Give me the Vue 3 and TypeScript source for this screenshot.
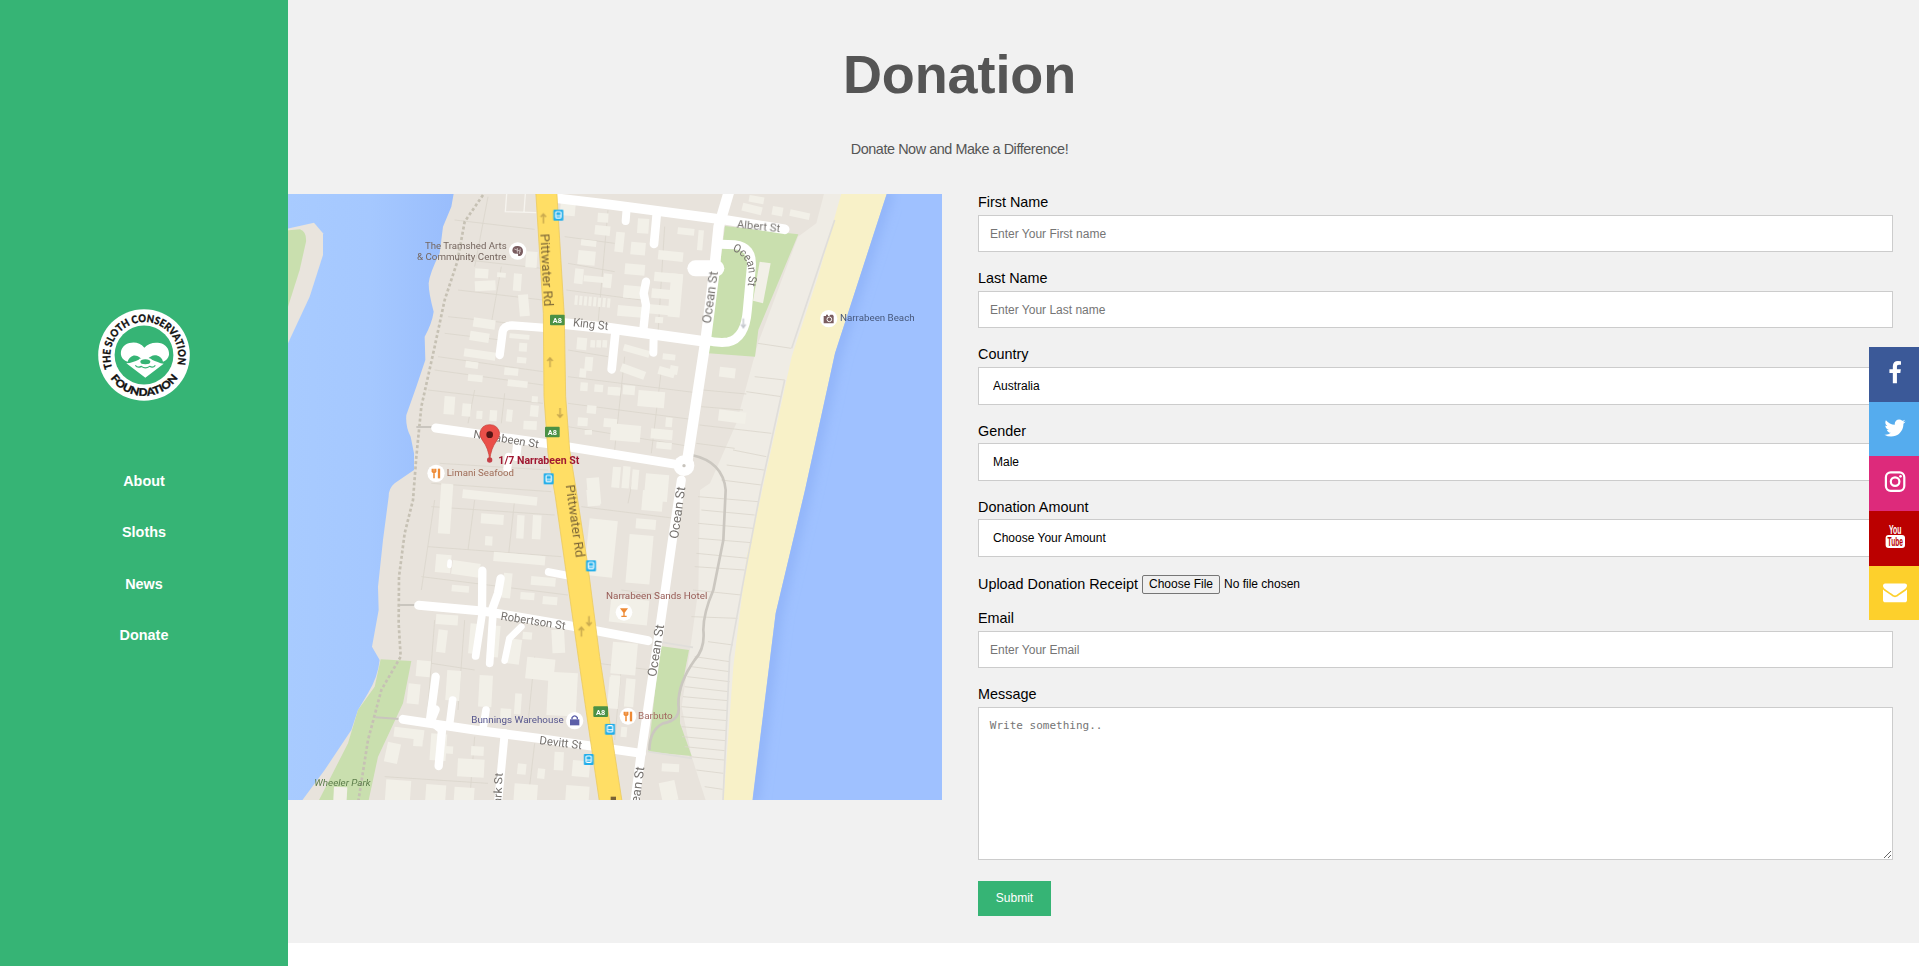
<script setup lang="ts">
import { ref } from 'vue'

interface Road { d: string; w: number }
interface Label { t: string; x: number; y: number; len: number; size: number; rot?: number; color?: string; bold?: boolean; italic?: boolean }

const links: string[] = ['About', 'Sloths', 'News', 'Donate']

const firstName = ref('')
const lastName = ref('')
const country = ref('Australia')
const gender = ref('Male')
const amount = ref('Choose Your Amount')
const email = ref('')
const message = ref('')

const roads: Road[] = [
  { d: 'M635 495L644 425Q647 407 672 406L800 416', w: 25 },
  { d: 'M800 398L966 415L1256 455', w: 32 },
  { d: 'M800 24L966 44L1300 88L1490 118', w: 29 },
  { d: 'M1323 5L1292 110L1277 260L1253 450L1196 825', w: 32 },
  { d: 'M1180 870L1156 1030L1113 1330L1058 1700L1040 1840', w: 27 },
  { d: 'M1300 163L1340 164Q1395 170 1390 230L1378 360Q1372 445 1320 456Q1290 460 1250 450', w: 27 },
  { d: 'M1222 235L1285 235', w: 48 },
  { d: 'M1016 55L1013 93', w: 24 },
  { d: 'M1106 75L1098 162', w: 26 },
  { d: 'M1074 275L1067 310L1074 345L1066 420', w: 25 },
  { d: 'M982 430L971 538', w: 26 },
  { d: 'M1097 440L1096 488', w: 24 },
  { d: 'M443 714L800 764L1188 827', w: 27 },
  { d: 'M688 765L684 800', w: 26 },
  { d: 'M662 800L658 835', w: 24 },
  { d: 'M392 1246L590 1264L840 1306L1080 1352', w: 27 },
  { d: 'M583 1142L582 1265', w: 25 },
  { d: 'M638 1165L630 1210L610 1265', w: 25 },
  { d: 'M582 1275L563 1398', w: 23 },
  { d: 'M615 1270L605 1420', w: 23 },
  { d: 'M700 1310L664 1345L650 1412', w: 20 },
  { d: 'M782 1146L845 1158', w: 23 },
  { d: 'M485 1115L484 1128', w: 14 },
  { d: 'M345 1588L560 1620L750 1645L1060 1690', w: 27 },
  { d: 'M443 1558L428 1595', w: 25 },
  { d: 'M443 1460L426 1590L462 1620L452 1728', w: 25 },
  { d: 'M494 1530L485 1600', w: 23 },
  { d: 'M594 1560L585 1615', w: 23 },
  { d: 'M650 1630L630 1840', w: 24 },
]

/* x, y, width, height, tilt */
const blocks: number[][] = [
  [562, 235, 40, 28, 4], [560, 274, 62, 30, -3], [628, 247, 26, 14, 5], [678, 250, 24, 52, 4], [690, 315, 30, 65, -5],
  [558, 382, 66, 28, 8], [548, 422, 58, 28, 9], [530, 475, 95, 24, 8], [665, 430, 60, 14, 5], [694, 458, 24, 26, 4],
  [688, 500, 28, 18, 6], [534, 512, 38, 20, 8], [541, 552, 44, 20, 6], [650, 532, 42, 22, 6], [660, 568, 60, 20, 6],
  [470, 618, 32, 54, 4], [524, 640, 26, 38, 5], [566, 662, 18, 24, 4], [606, 660, 22, 32, 4], [657, 658, 18, 36, 6],
  [728, 645, 25, 34, 5], [732, 618, 18, 18, 4], [707, 692, 40, 26, 3], [715, 184, 34, 48, 4],
  [820, 20, 45, 55, 5], [930, 68, 32, 28, 4], [922, 105, 46, 28, 6], [880, 148, 46, 18, 6], [872, 180, 52, 42, 6],
  [862, 235, 26, 45, 6], [888, 256, 60, 18, 5], [948, 250, 25, 42, 6], [868, 442, 30, 36, 5], [908, 450, 14, 22, 4],
  [926, 450, 14, 22, 4], [944, 450, 14, 22, 4], [892, 500, 24, 42, 5], [876, 535, 20, 26, 6], [878, 577, 22, 25, 4],
  [920, 583, 26, 22, 4], [960, 590, 30, 24, 4], [898, 645, 28, 24, 6], [870, 682, 30, 25, 4], [948, 684, 40, 26, 5],
  [890, 720, 22, 14, 0], [1050, 85, 34, 44, 4], [985, 125, 26, 60, 6], [1030, 155, 44, 38, 5], [1170, 112, 50, 20, 6],
  [1232, 120, 16, 60, 5], [1112, 180, 75, 28, 6], [1012, 220, 60, 32, 5], [1008, 285, 60, 38, 5], [1100, 245, 85, 28, 5],
  [1092, 295, 80, 28, 5], [1150, 250, 36, 130, 5], [990, 345, 76, 32, 5], [1080, 342, 75, 28, 5], [1102, 380, 24, 18, 5],
  [1366, 38, 60, 24, 14], [1455, 48, 32, 26, 10], [1508, 58, 60, 20, 12], [1385, 15, 45, 20, 10],
  [1010, 462, 80, 20, 16], [1004, 520, 75, 25, 20], [1125, 490, 38, 18, 6], [1115, 528, 50, 24, 16], [1148, 525, 24, 26, 10],
  [970, 590, 28, 25, 5], [1006, 585, 36, 28, 5], [1052, 600, 80, 48, 5], [1134, 682, 20, 28, 5], [970, 700, 90, 50, 5],
  [1090, 715, 65, 30, 5], [1106, 755, 46, 20, 5], [975, 830, 24, 62, 5], [1006, 828, 22, 66, 5], [1034, 838, 20, 60, 5],
  [1074, 850, 70, 80, 5], [1296, 530, 48, 30, 7], [1294, 658, 82, 34, 7],
  [895, 865, 38, 80, -5], [525, 898, 225, 26, 6], [460, 880, 36, 150, 4], [580, 970, 68, 30, 4], [688, 975, 22, 70, 3],
  [735, 975, 26, 72, 3], [592, 1038, 22, 28, 3], [618, 1085, 155, 28, 5], [445, 1092, 46, 54, 5], [495, 1110, 84, 42, 8],
  [648, 1148, 26, 75, 6], [730, 1158, 74, 26, 5], [492, 1184, 52, 20, 5], [698, 1206, 42, 22, 4], [765, 1218, 44, 24, 5],
  [445, 1272, 66, 30, 4], [452, 1318, 28, 68, 7], [548, 1300, 32, 90, 5], [604, 1305, 34, 95, 5], [665, 1345, 38, 75, 8],
  [705, 1325, 28, 22, 5], [790, 1320, 38, 70, -3], [387, 1410, 42, 48, 5], [362, 1480, 36, 60, 6], [478, 1440, 42, 90, 4],
  [575, 1455, 40, 95, 3], [718, 1400, 85, 65, 6], [782, 1445, 88, 130, 3], [682, 1510, 20, 62, 4], [638, 1555, 32, 30, 3],
  [320, 1610, 90, 30, 7], [300, 1655, 40, 60, 12], [378, 1630, 28, 38, 4], [430, 1630, 48, 80, 4], [470, 1668, 26, 22, 4],
  [510, 1705, 80, 54, 3], [550, 1668, 38, 28, 3], [690, 1720, 26, 32, 6], [750, 1735, 22, 30, 6], [800, 1685, 28, 55, 3],
  [855, 1710, 52, 48, 5], [295, 1768, 75, 70, 4], [415, 1782, 60, 55, 4], [500, 1790, 60, 45, 4], [680, 1780, 70, 60, 4],
  [835, 1785, 70, 55, 4], [905, 985, 85, 170, 6], [895, 900, 38, 50, -5], [1065, 900, 62, 60, 5], [1045, 985, 60, 30, 5],
  [1025, 1032, 72, 146, 5], [970, 1220, 115, 75, 6], [975, 1355, 75, 95, 5], [968, 1455, 30, 100, 5], [1015, 1465, 28, 85, 5],
  [1000, 1610, 18, 30, 5], [1122, 1720, 52, 24, 3], [1112, 1780, 48, 60, -12], [965, 1460, 20, 80, 5], [138, 1790, 40, 45, 3],
]

const lots: string[] = [
  'M500 90L740 118', 'M540 210L760 235', 'M510 300L765 330', 'M480 380L765 410', 'M470 430L640 450', 'M450 500L765 545',
  'M440 540L765 585', 'M420 600L765 640', 'M455 820L780 840', 'M600 20L560 230', 'M640 230L610 400', 'M560 600L540 700', 'M650 610L640 700',
  'M430 880L790 905', 'M430 950L800 975', 'M420 1070L820 1100', 'M400 1160L840 1215', 'M440 930L400 1200', 'M560 930L540 1080',
  'M680 930L660 1110', 'M440 1290L420 1550', 'M530 1290L510 1560', 'M740 1400L720 1600', 'M430 1420L560 1440',
  'M290 1760L600 1780', 'M560 1640L545 1830', 'M740 1660L720 1830', 'M830 140L980 160', 'M840 220L980 245', 'M835 300L1060 330',
  'M840 480L960 500', 'M840 560L1240 610', 'M840 640L1225 690', 'M840 710L1210 770', 'M960 60L930 400', 'M1130 110L1110 430',
  'M1010 500L980 780', 'M1120 540L1090 790', 'M1040 840L1020 940', 'M880 950L1160 985', 'M1000 1200L1120 1215', 'M930 1420L1090 1440',
  'M1000 1430L980 1650', 'M1400 560L1490 570', 'M1375 605L1480 620', 'M1245 600L1375 612', 'M1240 650L1365 660', 'M1235 705L1450 730',
  'M1225 760L1340 775', 'M1335 780L1435 800', 'M1316 825L1428 840', 'M1300 870L1420 885', 'M1410 460L1510 475', 'M1230 920L1410 935',
  'M1240 960L1400 975', 'M1230 1000L1395 1015', 'M1230 1045L1390 1058', 'M1225 1090L1380 1105', 'M1220 1130L1370 1140',
  'M1215 1200L1360 1215', 'M1210 1280L1348 1285', 'M1260 1355L1335 1365', 'M1220 1400L1325 1415', 'M1210 1430L1325 1445',
  'M1198 1460L1325 1475', 'M1190 1490L1322 1505', 'M1185 1520L1320 1532', 'M1180 1550L1320 1562', 'M1180 1580L1318 1592',
  'M1180 1610L1315 1622', 'M1182 1640L1312 1652', 'M1190 1670L1310 1682', 'M1205 1700L1308 1710', 'M1225 1740L1306 1750', 'M1250 1790L1304 1798',
]

const labels: Label[] = [
  { t: 'The Tramshed Arts', x: 411, y: 176, len: 245, size: 29, color: '#75665f' },
  { t: '& Community Centre', x: 387, y: 211, len: 268, size: 29, color: '#75665f' },
  { t: 'Pittwater Rd', x: 757, y: 132, len: 218, size: 37, rot: 87, color: '#7a6436' },
  { t: 'Pittwater Rd', x: 834, y: 886, len: 220, size: 37, rot: 82, color: '#7a6436' },
  { t: 'King St', x: 854, y: 409, len: 106, size: 36, rot: 6 },
  { t: 'Albert St', x: 1346, y: 112, len: 130, size: 34, rot: 6 },
  { t: 'Ocean St', x: 1269, y: 402, len: 158, size: 38, rot: -82 },
  { t: 'Ocean St', x: 1170, y: 1048, len: 158, size: 38, rot: -82 },
  { t: 'Ocean St', x: 1104, y: 1462, len: 158, size: 38, rot: -81 },
  { t: 'Ocean St', x: 1047, y: 1888, len: 158, size: 38, rot: -82 },
  { t: 'Park St', x: 638, y: 1867, len: 118, size: 34, rot: -87 },
  { t: 'Narrabeen St', x: 555, y: 743, len: 198, size: 34, rot: 9 },
  { t: 'Robertson St', x: 637, y: 1289, len: 196, size: 35, rot: 9 },
  { t: 'Devitt St', x: 753, y: 1662, len: 128, size: 35, rot: 7 },
  { t: '1/7 Narrabeen St', x: 631, y: 821, len: 243, size: 31, color: '#a01830', bold: true },
  { t: 'Limani Seafood', x: 476, y: 858, len: 202, size: 29, color: '#a06d58' },
  { t: 'Narrabeen Beach', x: 1656, y: 393, len: 224, size: 27, color: '#46577b' },
  { t: 'Narrabeen Sands Hotel', x: 954, y: 1227, len: 304, size: 28, color: '#975b55' },
  { t: 'Barbuto', x: 1050, y: 1587, len: 104, size: 28, color: '#a36a62' },
  { t: 'Bunnings Warehouse', x: 550, y: 1600, len: 277, size: 28, color: '#55558d' },
  { t: 'Wheeler Park', x: 79, y: 1789, len: 169, size: 26, color: '#5c7d4b', italic: true },
]

const stops: number[][] = [[811, 75], [782, 866], [909, 1127], [966, 1617], [902, 1708]]
const shields: number[][] = [[808, 390], [793, 726], [938, 1565]]
const arrows: number[][] = [[766, 85, 0], [786, 517, 0], [816, 669, 180], [903, 1293, 180], [880, 1325, 0]]
</script>

<template>
  <div class="page">
    <aside class="sidebar">
      <svg class="logo" viewBox="0 0 96 96" role="img" aria-label="The Sloth Conservation Foundation">
        <defs>
          <path id="ring-top" d="M16.4 60.9A34 34 0 1 1 80.8 58.9" />
          <path id="ring-bottom" d="M13.2 69.7A41.2 41.2 0 0 0 82.8 69.7" />
        </defs>
        <circle cx="48" cy="48" r="45.8" fill="#fff" />
        <circle cx="48" cy="48" r="29.4" fill="#36b475" />
        <text class="ring-text"><textPath href="#ring-top" textLength="127" lengthAdjust="spacingAndGlyphs">THE SLOTH CONSERVATION</textPath></text>
        <text class="ring-text"><textPath href="#ring-bottom" startOffset="2" textLength="79" lengthAdjust="spacingAndGlyphs">FOUNDATION</textPath></text>
        <g transform="translate(-16 -16.3) scale(.33333)">
          <path d="M193 171C181 156 164 153 148 157C128 162 119 180 124 197C127 206 135 211 143 213C148 198 160 191 172 196C180 199 183 205 190 207C194 208 199 207 203 205C210 198 218 192 229 194C241 197 247 205 249 213C258 210 265 203 267 193C269 175 257 160 239 157C221 154 205 158 193 171Z" fill="#fff" />
          <path d="M139 218C153 218 165 211 176 207C181 199 210 199 216 207C227 211 239 218 251 219L196 261Z" fill="#fff" />
          <ellipse cx="196" cy="213" rx="15" ry="7.500" fill="#36b475" />
          <path d="M166 224Q173 233 184 227Q196 236 209 227Q219 233 226 224" fill="none" stroke="#36b475" stroke-width="3.500" />
        </g>
      </svg>
      <nav class="nav">
        <a v-for="l in links" :key="l" href="#">{{ l }}</a>
      </nav>
    </aside>

    <main class="content">
      <header class="heading">
        <h1>Donation</h1>
        <p>Donate Now and Make a Difference!</p>
      </header>

      <div class="columns">
        <svg class="map" viewBox="0 12 1962 1818" preserveAspectRatio="none">
          <defs>
            <linearGradient id="lagoon" x1="0" x2="1" y1="0" y2="0">
              <stop offset="0" stop-color="#a8cbff" />
              <stop offset=".5" stop-color="#a5c8ff" />
              <stop offset="1" stop-color="#99bdfc" />
            </linearGradient>
            <filter id="shore" x="-10%" y="-10%" width="120%" height="120%"><feGaussianBlur stdDeviation="18" /></filter>
            <filter id="soft" x="0" y="0" width="100%" height="100%"><feGaussianBlur stdDeviation="1.8" /></filter>
            <filter id="soft-text" x="0" y="0" width="100%" height="100%"><feGaussianBlur stdDeviation="0.9" /></filter>
            <clipPath id="sea"><path d="M1796 12L1641 490L1551 900L1463 1270L1394 1830H1962V12Z" /></clipPath>
            <path id="bend" d="M1332 182Q1400 205 1376 300" />
          </defs>
          <g filter="url(#soft)">
            <rect x="-10" y="0" width="1990" height="1850" fill="#e8e3dc" />
            <path d="M1611 0L1585 100L1530 140L1410 460L1345 700L1266 880L1236 900L1231 1200L1206 1380L1181 1550L1211 1700L1256 1840H1962V0Z" fill="#efece5" />
            <path d="M1663 0L1590 260L1511 500L1416 930L1376 1100L1336 1430L1306 1840H1962V0Z" fill="#f8f1c8" />
            <path d="M1800 0L1641 490L1551 900L1463 1270L1392 1840H1980V0Z" fill="#9fc1ff" />
            <g clip-path="url(#sea)"><path d="M1800 0L1641 490L1551 900L1463 1270L1392 1840" fill="none" stroke="#8fb2f8" stroke-width="36" filter="url(#shore)" /></g>
            <path d="M-10 0H499L490 50L465 110L455 190Q425 250 422 280Q422 310 437 365Q432 400 410 440L412 510L385 590L355 675Q352 710 368 740L378 790V840L320 880Q302 895 302 920L285 1050L270 1190L272 1260L252 1370L275 1410Q270 1460 240 1510L210 1560L190 1620L110 1740L36 1840H-10Z" fill="url(#lagoon)" />
            <path d="M-10 118L78 98L105 130V195L65 320L0 460H-10Z" fill="#e9e4dd" />
            <path d="M-10 122L36 118Q56 125 54 155L35 240L0 350H-10Z" fill="#c9dfae" />
            <path d="M1311 108L1531 133L1411 420L1401 500L1261 490Z" fill="#c9dfae" />
            <path d="M1116 1368L1203 1380L1176 1520V1600L1211 1698L1081 1685Z" fill="#c9dfae" />
            <path d="M278 1408L370 1413L345 1540L270 1700L240 1840H88L180 1660L210 1560L260 1490Z" fill="#c9dfae" />
            <g fill="none" stroke="#dbd6cd" stroke-width="2.500"><path v-for="d in lots" :key="d" :d="d" /></g>
            <g fill="#f2f0e8">
              <rect v-for="(b, i) in blocks" :key="i" :x="b[0]" :y="b[1]" :width="b[2]" :height="b[3]" :transform="`rotate(${b[4]} ${b[0]} ${b[1]})`" />
              <path d="M1415 215L1448 220L1425 340L1395 332Z" />
              <path d="M860 330H970" stroke="#f2f0e8" stroke-width="28" stroke-dasharray="9 5" transform="rotate(5 860 330)" />
            </g>
            <path d="M656 12L652 65L745 68M712 12L708 66" fill="none" stroke="#f6f4ef" stroke-width="4" />
            <path d="M585 15L530 95L508 215L470 330L440 470L400 650L385 800L375 930L350 1030L333 1160L332 1300L338 1400L280 1500L240 1650L210 1840" fill="none" stroke="#c6c1b4" stroke-width="8" stroke-dasharray="9 7" />
            <path d="M385 711H440M335 1245H385M262 1582L345 1588" stroke="#c9c5be" stroke-width="6" />
            <path d="M1211 795Q1305 815 1313 900L1306 1050L1276 1200Q1246 1270 1246 1320Q1252 1375 1220 1410Q1170 1480 1171 1545Q1180 1590 1125 1600Q1085 1620 1084 1680" fill="none" stroke="#cbc7c0" stroke-width="8" />
            <path d="M1640 90L1511 475M1490 570L1420 890L1365 1180L1325 1400L1305 1830M1081 1685L1212 1705M1110 1355L1215 1372" fill="none" stroke="#e0deda" stroke-width="5" />
            <g fill="none" stroke="#fff" stroke-linecap="round" stroke-linejoin="round">
              <path v-for="r in roads" :key="r.d" :d="r.d" :stroke-width="r.w" />
            </g>
            <circle cx="1188" cy="827" r="31" fill="#fff" />
            <circle cx="1188" cy="827" r="5" fill="#c8c4bd" />
            <path d="M743 0L766 370L768 620L780 790L802 920L875 1430L935 1840H1003L935 1400L900 1130L866 910L845 780L833 620L829 380L806 0Z" fill="#ffde65" stroke="#eccb62" stroke-width="2.500" />
          </g>

          <g filter="url(#soft-text)">
            <g v-for="(a, i) in arrows" :key="'a' + i" :transform="`translate(${a[0]} ${a[1]}) rotate(${a[2]})`">
              <path d="M0 15V-13M-8 -4L0 -13L8 -4" fill="none" stroke="#c9a94f" stroke-width="4.500" />
            </g>
            <path d="M1366 385V412M1359 403L1366 413L1373 403" fill="none" stroke="#c3c6cc" stroke-width="4" />

            <g v-for="(s, i) in stops" :key="'s' + i" :transform="`translate(${s[0]} ${s[1]})`">
              <rect x="-15" y="-16" width="30" height="33" rx="3" fill="#22aeea" />
              <rect x="-8" y="-10" width="16" height="19" rx="3" fill="none" stroke="#fff" stroke-width="3.500" />
              <path d="M-7 2H7" stroke="#fff" stroke-width="3" />
            </g>
            <g v-for="(s, i) in shields" :key="'h' + i">
              <rect :x="s[0] - 22" :y="s[1] - 16" width="44" height="32" rx="3" fill="#4c9145" />
              <text :x="s[0]" :y="s[1] + 9" text-anchor="middle" class="shield">A8</text>
            </g>

            <g fill="#fff">
              <circle cx="689" cy="183" r="26" /><circle cx="444" cy="850" r="26" /><circle cx="1622" cy="386" r="26" />
              <circle cx="1008" cy="1267" r="25" /><circle cx="1020" cy="1579" r="25" /><circle cx="860" cy="1592" r="26" />
            </g>
            <path d="M673 182Q673 167 690 168Q706 170 705 186Q702 201 690 197Q692 189 685 191Q675 192 673 182Z" fill="#7a5d60" />
            <path d="M679 177L698 184M688 174V188M697 176L694 192" stroke="#d8cccc" stroke-width="2.500" />
            <g v-for="(f, i) in [[444, 850], [1020, 1579]]" :key="'f' + i" :transform="`translate(${f[0]} ${f[1]})`" stroke="#ee8a35" fill="none">
              <path d="M-11 -14V-5Q-6 2 -1 -5V-14M-6 -14V15" stroke-width="4.500" />
              <path d="M9 -14V15" stroke-width="7" />
            </g>
            <path d="M996 1255H1020L1010 1268V1277H1016V1281H1000V1277H1006V1268Z" fill="#ee8a35" />
            <path d="M1607 378H1614V374H1620V378H1624L1627 374H1634L1637 378V400H1607Z" fill="#7a5d60" />
            <circle cx="1624" cy="388" r="7" fill="#7a5d60" stroke="#fff" stroke-width="3" />
            <path d="M846 1588H874V1606H846Z" fill="#5b5ea8" />
            <path d="M852 1588V1583Q860 1572 868 1583V1588" fill="none" stroke="#5b5ea8" stroke-width="4" />

            <text
              v-for="(l, i) in labels" :key="'l' + i" :x="l.x" :y="l.y" :textLength="l.len" lengthAdjust="spacingAndGlyphs"
              :font-size="l.size" :fill="l.color ?? '#77736f'" :font-weight="l.bold ? 700 : 400"
              :font-style="l.italic ? 'italic' : 'normal'" :transform="l.rot ? `rotate(${l.rot} ${l.x} ${l.y})` : undefined"
              class="map-label"
            >{{ l.t }}</text>
            <text class="map-label" font-size="35" fill="#77736f"><textPath href="#bend" textLength="128" lengthAdjust="spacingAndGlyphs">Ocean St</textPath></text>

            <circle cx="605" cy="810" r="8" fill="#c5414a" />
            <path d="M605 810Q602 775 584 752Q574 738 576 728Q581 704 605 704Q630 704 635 730Q635 742 625 754Q609 775 605 810Z" fill="#ea5048" stroke="#c23b36" stroke-width="2" />
            <circle cx="605" cy="734" r="10" fill="#521313" />
            <path d="M968 1820H984V1830H968Z" fill="#7a6436" />
          </g>
        </svg>

        <form class="form" @submit.prevent>
          <div class="field">
            <label for="fname">First Name</label>
            <input id="fname" v-model="firstName" type="text" placeholder="Enter Your First name">
          </div>
          <div class="field">
            <label for="lname">Last Name</label>
            <input id="lname" v-model="lastName" type="text" placeholder="Enter Your Last name">
          </div>
          <div class="field">
            <label for="country">Country</label>
            <select id="country" v-model="country"><option>Australia</option></select>
          </div>
          <div class="field low">
            <label for="gender">Gender</label>
            <select id="gender" v-model="gender"><option>Male</option></select>
          </div>
          <div class="field low">
            <label for="amount">Donation Amount</label>
            <select id="amount" v-model="amount"><option>Choose Your Amount</option></select>
          </div>
          <div class="upload">
            <label for="receipt">Upload Donation Receipt</label>
            <input id="receipt" type="file">
          </div>
          <div class="field">
            <label for="email">Email</label>
            <input id="email" v-model="email" type="text" placeholder="Enter Your Email">
          </div>
          <div class="field message">
            <label for="message">Message</label>
            <textarea id="message" v-model="message" placeholder="Write something.." />
          </div>
          <button type="submit" class="submit">Submit</button>
        </form>
      </div>
    </main>

    <div class="social">
      <a href="#" class="facebook" aria-label="Facebook">
        <svg viewBox="0 0 1792 1792"><path d="M1343 12v264h-157q-86 0-116 36t-30 108v189h293l-39 296h-254v759h-306v-759h-255v-296h255v-218q0-186 104-288.500t277-102.500q147 0 228 12z" /></svg>
      </a>
      <a href="#" class="twitter" aria-label="Twitter">
        <svg viewBox="0 0 1792 1792"><path d="M1684 408q-67 98-162 167 1 14 1 42 0 130-38 259.500t-115.500 248.500-184.500 210.500-258 146-323 54.500q-271 0-496-145 35 4 78 4 225 0 401-138-105-2-188-64.500t-114-159.500q33 5 61 5 43 0 85-11-112-23-185.500-111.500t-73.500-205.500v-4q68 38 146 41-66-44-105-115t-39-154q0-88 44-163 121 149 294.500 238.500t371.500 99.500q-8-38-8-74 0-134 94.500-228.500t228.500-94.500q140 0 236 102 109-21 205-78-37 115-142 178 93-10 186-50z" /></svg>
      </a>
      <a href="#" class="instagram" aria-label="Instagram">
        <svg viewBox="0 0 24 24">
          <rect x="2.900" y="2.400" width="18.400" height="18.400" rx="4.800" fill="none" stroke="#fff" stroke-width="2.200" />
          <circle cx="12.100" cy="11.600" r="4.300" fill="none" stroke="#fff" stroke-width="2.200" />
          <circle cx="17.500" cy="6.300" r="1.350" />
        </svg>
      </a>
      <a href="#" class="youtube" aria-label="YouTube">
        <svg viewBox="0 0 24 24">
          <text x="6" y="9.200" font-size="12" textLength="12.600" lengthAdjust="spacingAndGlyphs" class="tube">You</text>
          <rect x="2.600" y="10" width="19.400" height="13" rx="3" />
          <text x="4.600" y="21" font-size="12" textLength="15.400" lengthAdjust="spacingAndGlyphs" class="tube cut">Tube</text>
        </svg>
      </a>
      <a href="#" class="mail" aria-label="Email">
        <svg viewBox="0 0 1792 1792"><path d="M1792 710v794q0 66-47 113t-113 47h-1472q-66 0-113-47t-47-113v-794q44 49 101 87 362 246 497 345 57 42 92.500 65.500t94.500 48 110 24.500h2q51 0 110-24.500t94.500-48 92.500-65.500q170-123 498-345 57-39 100-87zm0-294q0 79-49 151t-122 123q-376 261-468 325-10 7-42.500 31t-54 38.800-52 33.200-57.500 27-50 9h-2q-23 0-50-9t-57.500-27-52-33.200-54-38.800-42.500-31q-91-64-262-182.500t-205-142.500q-62-42-117-115.500t-55-136.500q0-78 41.500-130t118.500-52h1472q65 0 112.500 47t47.500 113z" /></svg>
      </a>
    </div>
  </div>
</template>

<style scoped>
.page {
  min-height: 100vh;
  background: #fff;
  color: #000;
  font-family: "Liberation Sans", Arial, Helvetica, sans-serif;
  font-size: 14.4px;
}
.sidebar {
  position: fixed;
  inset: 0 auto 0 0;
  z-index: 2;
  box-sizing: border-box;
  width: 288px;
  padding-top: 306.5px;
  display: flex;
  flex-direction: column;
  align-items: center;
  background: #36b475;
}
.logo {
  width: 96px;
  height: 96px;
  display: block;
}
.ring-text {
  font-family: Lato, "Open Sans", sans-serif;
  font-weight: 900;
  font-size: 10.5px;
  fill: #111;
  stroke: #111;
  stroke-width: .3px;
}
.nav {
  margin-top: 53.5px;
  display: flex;
  flex-direction: column;
  align-items: center;
}
.nav a {
  height: 51.4px;
  line-height: 51.4px;
  color: #fff;
  font-weight: 700;
  text-decoration: none;
}
.content {
  box-sizing: border-box;
  height: 943px;
  background: #f1f1f1;
}
.heading {
  height: 194px;
  display: flow-root;
  text-align: center;
  color: #555;
}
.heading h1 {
  margin: 43px 0 0;
  font-size: 54px;
  line-height: 62px;
  letter-spacing: -.1px;
}
.heading p {
  margin: 35px 0 0;
  line-height: 18px;
  letter-spacing: -.43px;
}
.columns {
  display: grid;
  grid-template-columns: 654px 915px;
  column-gap: 36px;
  padding-left: 288px;
  align-items: start;
}
.map {
  display: block;
  width: 654px;
  height: 606px;
}
.map-label {
  font-family: Roboto, sans-serif;
}
.shield {
  font: 700 22px Roboto, sans-serif;
  fill: #fff;
}
.form {
  margin-top: -2px;
}
.field {
  height: 76px;
}
.field label {
  display: block;
  height: 23px;
  line-height: 20px;
}
.field.low label {
  line-height: 22px;
}
.field input,
.field select,
.field textarea {
  display: block;
  box-sizing: border-box;
  width: 100%;
  margin: 0;
  border: 1px solid #ccc;
  border-radius: 0;
  outline: none;
  background: #fff;
  color: #000;
  font: 12px "Liberation Sans", Arial, sans-serif;
}
.field input {
  height: 37px;
  padding: 10px 11px;
}
.field select {
  height: 38px;
  padding: 10px 14px;
  appearance: none;
}
.field input::placeholder,
.field textarea::placeholder {
  color: #757575;
  opacity: 1;
}
.field textarea {
  height: 153px;
  padding: 10.8px;
  resize: vertical;
  font: 11px "DejaVu Sans Mono", monospace;
}
.upload {
  height: 36px;
  display: flex;
  align-items: flex-start;
}
.upload label {
  line-height: 20px;
  padding-top: 2px;
}
.upload input {
  margin: 3px 0 0 4px;
  font: 12px "Liberation Sans", Arial, sans-serif;
}
.upload input::file-selector-button {
  box-sizing: border-box;
  width: 78px;
  height: 19px;
  margin: 0 4px 0 0;
  padding: 0 0 1px;
  border: 1px solid #767676;
  border-radius: 2px;
  background: #efefef;
  color: #000;
  font: 12px "Liberation Sans", Arial, sans-serif;
}
.message {
  height: 197px;
}
.submit {
  display: block;
  width: 73px;
  height: 35px;
  padding: 0 0 2px;
  border: 0;
  background: #36b475;
  color: #fff;
  font: 12px "Liberation Sans", Arial, sans-serif;
}
.social {
  position: fixed;
  top: 347px;
  right: 0;
  z-index: 3;
  width: 50px;
}
.social a {
  display: flex;
  justify-content: center;
  align-items: flex-start;
  box-sizing: border-box;
  height: 54.7px;
  padding-top: 14px;
}
.social svg {
  display: block;
  width: 24px;
  height: 24px;
  margin-left: 1px;
  fill: #fff;
}
.facebook { background: #3b5998; }
.twitter { background: #55acee; }
.instagram { background: #dd2a7b; }
.youtube { background: #bb0000; }
.mail { background: #fdd02c; }
.tube {
  font-family: "Liberation Sans", Arial, sans-serif;
  font-weight: 700;
}
.cut { fill: #bb0000; }
</style>

<style>
body {
  margin: 0;
  overflow: hidden;
}
</style>
